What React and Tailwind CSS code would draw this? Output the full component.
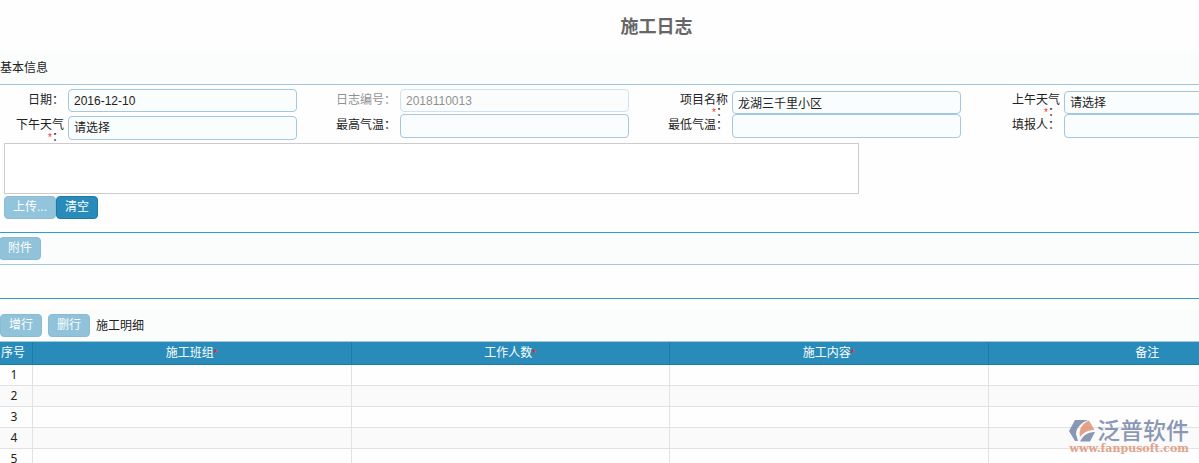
const FIELDS = [
  { id: "date", label: "日期", value: "2016-12-10" },
  { id: "logNo", label: "日志编号", value: "2018110013", disabled: true },
  { id: "project", label: "项目名称", value: "龙湖三千里小区", required: true },
  { id: "amWeather", label: "上午天气", required: true, options: ["请选择", "晴", "多云", "雨"] },
  { id: "pmWeather", label: "下午天气", required: true, options: ["请选择", "晴", "多云", "雨"] },
  { id: "maxTemp", label: "最高气温", value: "" },
  { id: "minTemp", label: "最低气温", value: "" },
  { id: "reporter", label: "填报人", value: "" },
];

const COLUMNS = [
  { name: "施工班组", required: true },
  { name: "工作人数", required: true },
  { name: "施工内容", required: true },
  { name: "备注" },
];

const ROWS = [1, 2, 3, 4, 5];

function Field({ field }) {
  const { id, label, value, required, disabled, options } = field;
  const control =
    "h-full w-full appearance-none rounded border border-[#a4c8e0] bg-[#fafdfd] px-[5px] text-xs text-[#222] outline-none";

  return (
    <div className={`flex items-stretch ${disabled ? "opacity-50" : ""}`}>
      <label htmlFor={id} className="w-16 shrink-0 pt-[5px] text-right leading-3">
        {label}
        {required && (
          <>
            <br />
            <span className="text-[10px] text-[#ff3030]">*</span>
          </>
        )}
        ：
      </label>
      <div className={`ml-1 w-[229px] shrink-0 ${required ? "pt-0.5" : "pb-0.5"}`}>
        {options ? (
          <select id={id} className={control}>
            {options.map((o) => (
              <option key={o}>{o}</option>
            ))}
          </select>
        ) : (
          <input id={id} type="text" defaultValue={value} disabled={disabled} className={control} />
        )}
      </div>
    </div>
  );
}

function Button({ children, disabled }) {
  return (
    <button
      type="button"
      disabled={disabled}
      className="h-[23px] rounded border border-[#1f7aa8] bg-[#288bb9] px-2 pb-0.5 text-xs leading-5 text-white disabled:opacity-50"
    >
      {children}
    </button>
  );
}

function Watermark() {
  return (
    <div className="pointer-events-none absolute right-2.5 bottom-2 opacity-80">
      <div className="flex items-center gap-0.5">
        <svg className="h-6 w-[26px]" viewBox="0 0 26 24">
          <path d="M6 1h13C12 4 7 9 7 15l2 7H6L0 12z" fill="#6f7fa3" />
          <path d="M11 22.500h10l5-9.500c-6-.5-12 3-15 9.500z" fill="#6f7fa3" />
          <path d="M20 1.500L25.500 11c-6 0-11 2.500-14.500 7C9.500 11 13 4 20 1.500z" fill="#dd8c6d" />
        </svg>
        <span className="text-[23px] leading-6 font-medium text-[#6f7fa3]">泛普软件</span>
      </div>
      <div className="text-right font-['DejaVu_Serif',serif] text-[11px] leading-3 font-bold text-[#dd8c6d]">
        www.fanpusoft.com
      </div>
    </div>
  );
}

export default function App() {
  return (
    <div className="relative h-screen overflow-hidden bg-[#fefefe] font-['Liberation_Sans','Noto_Sans_CJK_SC',sans-serif] text-xs text-[#222]">
      <h1 className="ml-[114px] pt-[13px] pb-[11px] text-center text-lg leading-7 font-bold text-[#666]">
        施工日志
      </h1>

      <section>
        <h2 className="border-b border-[#a4c8e0] bg-[#fafdfc] py-2 leading-4">基本信息</h2>
        <div className="grid grid-cols-[repeat(4,332px)] grid-rows-[25px_26px] pt-1">
          {FIELDS.map((f) => (
            <Field key={f.id} field={f} />
          ))}
        </div>
        <div className="px-1 pt-[3px]">
          <textarea
            aria-label="日志内容"
            className="block h-[51px] w-[855px] max-w-full resize-none border border-[#ccc] bg-white"
          />
          <div className="flex pt-0.5">
            <Button disabled>上传...</Button>
            <Button>清空</Button>
          </div>
        </div>
      </section>

      {/* Attachments */}
      <section className="mt-[13px] border-y border-[#2a9fd0]">
        <div className="-ml-px border-b border-[#a4c8e0] bg-[#fafdfc] py-1">
          <Button disabled>附件</Button>
        </div>
        <div className="h-[33px]" />
      </section>

      {/* Work details */}
      <section className="mt-[11px]">
        <div className="flex items-center gap-1.5 border-b border-[#a4c8e0] bg-[#fafdfc] py-1">
          <Button disabled>增行</Button>
          <Button disabled>删行</Button>
          <h2>施工明细</h2>
        </div>
        <table className="w-[1307px] table-fixed border-separate border-spacing-0">
          <thead>
            <tr className="h-[23px] bg-[#288bb9] text-white">
              <th className="w-[33px] border-r border-b border-[#1f7aa8] p-0 pr-1.5 font-normal whitespace-nowrap">
                序号
              </th>
              {COLUMNS.map((c) => (
                <th key={c.name} className="border-r border-b border-[#1f7aa8] p-0 font-normal">
                  {c.name}
                  {c.required && <span className="text-[10px] text-[#ff2020]">*</span>}
                </th>
              ))}
            </tr>
          </thead>
          <tbody>
            {ROWS.map((n) => (
              <tr key={n} className="h-[21px] even:bg-[#fafafa]">
                <td className="border-r border-b border-[#e2e2e2] p-0 pr-1 text-center font-['Noto_Sans',sans-serif]">
                  {n}
                </td>
                {COLUMNS.map((c) => (
                  <td key={c.name} className="border-r border-b border-[#e2e2e2] p-0" />
                ))}
              </tr>
            ))}
          </tbody>
        </table>
      </section>

      <Watermark />
    </div>
  );
}
